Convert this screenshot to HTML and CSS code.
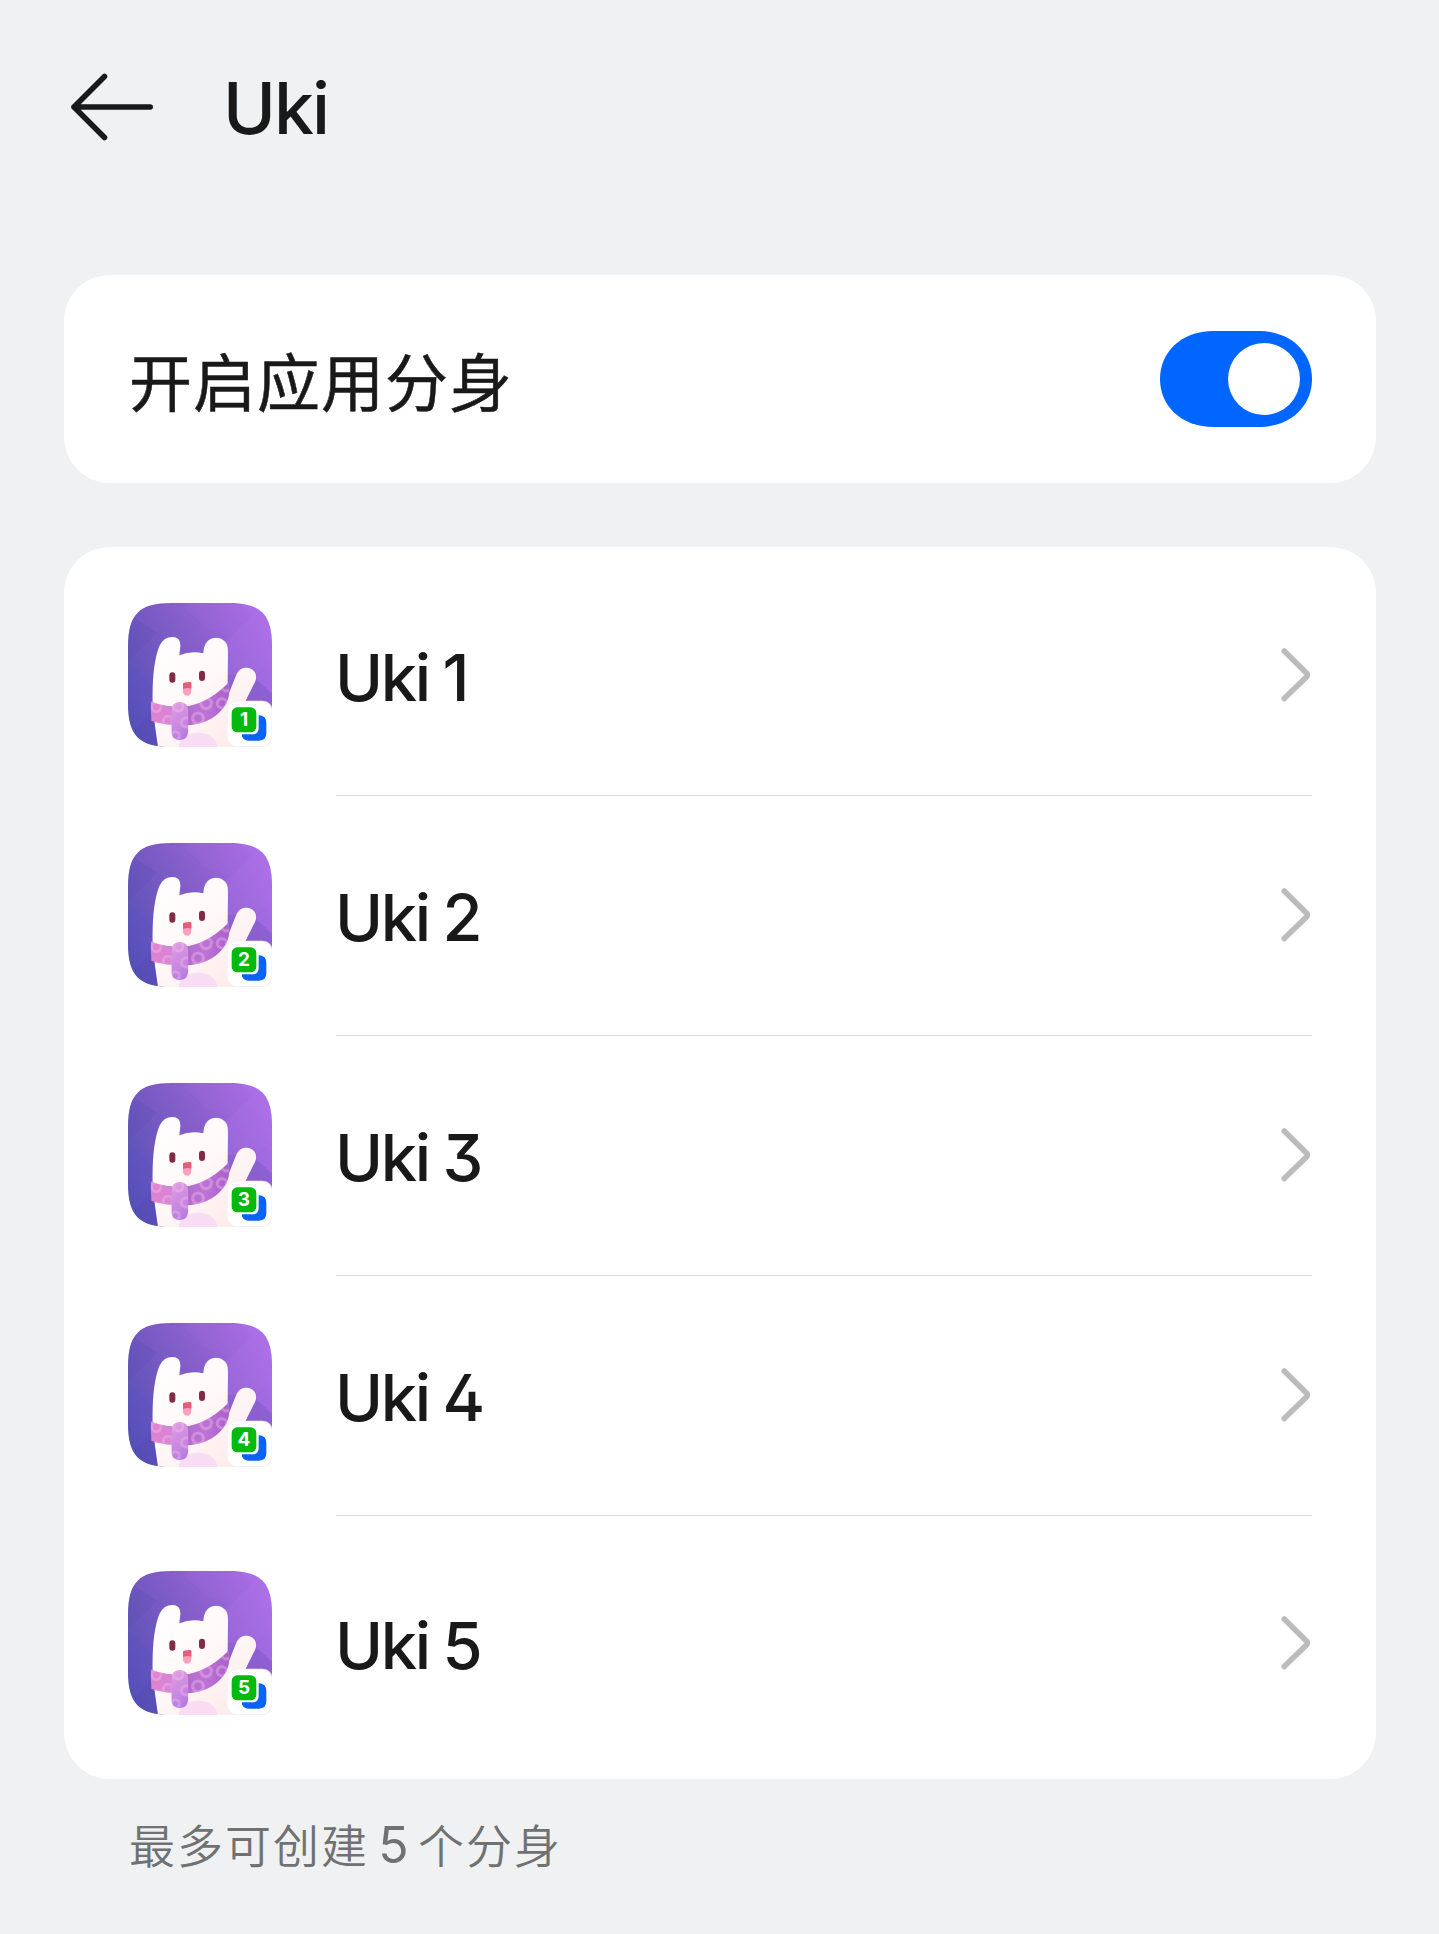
FILE: index.html
```html
<!DOCTYPE html>
<html lang="zh-CN">
<head>
<meta charset="utf-8">
<title>Uki</title>
<link rel="stylesheet" href="styles.css">
</head>
<body>
<svg class="defs" width="0" height="0" aria-hidden="true">
  <defs>
    <linearGradient id="sky" x1="0" y1="0.75" x2="1" y2="0.25">
      <stop offset="0" stop-color="#5651b4"/><stop offset="0.5" stop-color="#825dc8"/><stop offset="1" stop-color="#a86ce2"/>
    </linearGradient>
    <linearGradient id="fur" x1="0" y1="0" x2="0.8" y2="1">
      <stop offset="0" stop-color="#fff"/><stop offset="0.45" stop-color="#fffafa"/><stop offset="1" stop-color="#fdebea"/>
    </linearGradient>
    <linearGradient id="scarfLeft" x1="0" y1="0" x2="1" y2="0">
      <stop offset="0" stop-color="#e183cf"/><stop offset="1" stop-color="#d287d8"/>
    </linearGradient>
    <linearGradient id="scarfRight" x1="0" y1="0" x2="1" y2="0">
      <stop offset="0" stop-color="#b168cb"/><stop offset="0.5" stop-color="#bd74d6"/><stop offset="1" stop-color="#aa5fcb"/>
    </linearGradient>
    <linearGradient id="knot" x1="0" y1="0" x2="0.3" y2="1">
      <stop offset="0" stop-color="#e6a2e0"/><stop offset="1" stop-color="#b97ce0"/>
    </linearGradient>
    <clipPath id="tile"><path d="M160 33H332C428 33 462 67 462 163V465H160C64 465 30 431 30 335V163C30 67 64 33 160 33Z"/></clipPath>
    <clipPath id="scarfShape"><path d="M98 328Q130 341 164 343L208 343Q275 330 331 272Q340 318 316 348Q280 394 212 400L160 399Q124 395 100 386Z"/></clipPath>
    <clipPath id="knotShape"><path d="M160 358Q160 331 185 330Q211 331 211 358V418Q209 444 185 444Q160 444 160 418Z"/></clipPath>
    <symbol id="rabbit" viewBox="30 33 432 432">
      <g clip-path="url(#tile)">
        <rect x="30" y="33" width="432" height="432" fill="url(#sky)"/>
        <path d="M30 65L118 122L30 208Z" fill="#4038a0" opacity="0.1"/>
        <path d="M195 45L118 122L50 80L90 33H195Z" fill="#a46ae0" opacity="0.06"/>
        <path d="M195 45L262 105L340 130L402 70L365 33H205Z" fill="#b070ec" opacity="0.14"/>
        <path d="M402 70L220 250L410 250L462 215V33H365Z" fill="#b878f4" opacity="0.25"/>
        <path d="M30 430L120 345V465H30Z" fill="#4a40b8" opacity="0.2"/>
        <path d="M30 208L120 300V345L30 430Z" fill="#5a50c8" opacity="0.25"/>
        <path d="M462 215L408 256L462 305Z" fill="#b070f4" opacity="0.3"/>
        <path d="M408 256L462 305V340H380Z" fill="#8058cc" opacity="0.45"/>
        <path d="M120 465Q110 400 104 340Q101 220 124 163Q136 135 163 135C181 135 188 146 187 163L184 190Q220 175 256 184Q257 161 267 149C278 136 302 133 315 144C327 152 330 163 330 180L329 270L326 320L356 246C366 226 386 224 400 231C414 239 417 254 412 268L382 328V465Z" fill="url(#fur)"/>
        <rect x="382" y="380" width="80" height="85" fill="#fff"/>
        <ellipse cx="240" cy="466" rx="58" ry="44" fill="#f9dcf3"/>
        <g clip-path="url(#scarfShape)">
          <rect x="96" y="270" width="90" height="140" fill="url(#scarfLeft)"/>
          <rect x="186" y="265" width="150" height="140" fill="url(#scarfRight)"/>
          <g fill="none" stroke="#f0bcee" stroke-width="9" opacity="0.4">
            <circle cx="115" cy="345" r="14"/><circle cx="150" cy="387" r="14"/>
            <circle cx="240" cy="379" r="16"/><circle cx="264" cy="334" r="16"/>
            <circle cx="312" cy="334" r="14"/><circle cx="325" cy="285" r="12"/>
          </g>
        </g>
        <g clip-path="url(#knotShape)">
          <rect x="158" y="328" width="56" height="118" fill="url(#knot)"/>
          <g fill="none" stroke="#f0b8f0" stroke-width="9" opacity="0.4">
            <circle cx="181" cy="343" r="14"/><circle cx="204" cy="391" r="14"/><circle cx="172" cy="431" r="12"/>
          </g>
        </g>
        <rect x="154" y="241" width="18" height="31" rx="9" fill="#832a46"/>
        <rect x="243" y="236" width="18" height="31" rx="9" fill="#832a46"/>
        <path d="M195 276Q195 272 199 272L217 270Q220 270 220 274V296Q219 311 208 311Q195 311 195 298Z" fill="#ff9fba"/>
        <path d="M195 276Q195 272 199 272L217 270Q220 270 220 274V290Q208 285 195 291Z" fill="#e95a80"/>
      </g>
      <rect x="326" y="326" width="137" height="139" rx="29" fill="#f4f2f7"/>
      <rect x="329" y="329" width="131" height="133" rx="27" fill="#fff"/>
      <path d="M422 370Q445 371 445 393V424Q445 446 423 446H393Q372 446 371 427H402Q422 427 422 407Z" fill="#0a63f7"/>
      <rect x="341" y="346" width="74" height="75" rx="17" fill="#05b90f"/>
    </symbol>
    <symbol id="chevron" viewBox="0 0 32 56">
      <path d="M4.2 4L26.6 26.2Q28.2 28 26.6 29.8L4.2 51.5" fill="none" stroke="#bcbcbc" stroke-width="5.6" stroke-linecap="round"/>
    </symbol>
  </defs>
</svg>

<header class="header">
  <svg class="back" viewBox="0 0 88 72"><path d="M36.5 5.5L6 36L36.5 66.5M6 36H82.2" fill="none" stroke="#191919" stroke-width="5.6" stroke-linecap="round" stroke-linejoin="round"/></svg>
  <h1 class="title">Uki</h1>
</header>

<main class="content">
  <section class="card switch-card">
    <span class="switch-label">开启应用分身</span>
    <svg class="toggle" viewBox="0 0 152 96"><path d="M54 0H98C132 0 152 22 152 48S132 96 98 96H54C20 96 0 74 0 48S20 0 54 0Z" fill="#0066ff"/><circle cx="104" cy="48" r="36" fill="#fff"/></svg>
  </section>

  <section class="card list">
    <div class="row">
      <div class="app"><svg class="app-art"><use href="#rabbit"/></svg><span class="badge">1</span></div>
      <div class="name">Uki 1</div>
      <svg class="chevron"><use href="#chevron"/></svg>
    </div>
    <div class="row">
      <div class="app"><svg class="app-art"><use href="#rabbit"/></svg><span class="badge">2</span></div>
      <div class="name">Uki 2</div>
      <svg class="chevron"><use href="#chevron"/></svg>
    </div>
    <div class="row">
      <div class="app"><svg class="app-art"><use href="#rabbit"/></svg><span class="badge">3</span></div>
      <div class="name">Uki 3</div>
      <svg class="chevron"><use href="#chevron"/></svg>
    </div>
    <div class="row">
      <div class="app"><svg class="app-art"><use href="#rabbit"/></svg><span class="badge">4</span></div>
      <div class="name">Uki 4</div>
      <svg class="chevron"><use href="#chevron"/></svg>
    </div>
    <div class="row">
      <div class="app"><svg class="app-art"><use href="#rabbit"/></svg><span class="badge">5</span></div>
      <div class="name">Uki 5</div>
      <svg class="chevron"><use href="#chevron"/></svg>
    </div>
  </section>
  <p class="hint">最多可创建 <span class="hint-num">5</span> 个分身</p>
</main>
</body>
</html>
```
FILE: styles.css
```css
* { box-sizing: border-box; }

body {
  margin: 0;
  min-height: 1934px;
  background: #eff1f3;
  color: #191919;
  font-family: Inter, "Noto Sans CJK SC", sans-serif;
}

.defs { position: absolute; }

.header {
  display: flex;
  align-items: center;
  height: 214px;
  padding-left: 68px;
}

.back { width: 88px; height: 72px; }

.title {
  margin: 0 0 0 67px;
  padding-top: 1px;
  font: 450 71.5px/100px Inter, sans-serif;
  letter-spacing: -2px;
}

.content { padding: 61px 63px 0 64px; }

.card {
  background: #fff;
  border-radius: 46px;
}

.switch-card {
  display: flex;
  align-items: center;
  justify-content: space-between;
  height: 208px;
  padding: 0 64px 0 65px;
}

.switch-label {
  font: 400 63px/96px "Noto Sans CJK SC", sans-serif;
  letter-spacing: 1px;
  -webkit-text-stroke: 0.5px #191919;
}

.toggle { width: 152px; height: 96px; }

.list {
  margin-top: 64px;
  padding: 8px 64px 16px;
}

.row {
  display: grid;
  grid-template-columns: 144px 1fr 32px;
  column-gap: 64px;
  align-items: center;
  height: 240px;
}

.row + .row {
  background: linear-gradient(#dedede, #dedede) 208px 0 / 100% 1px no-repeat;
}

.row:last-child {
  height: 248px;
  padding-top: 8px;
}

.app {
  position: relative;
  width: 144px;
  height: 144px;
}

.app-art { display: block; width: 144px; height: 144px; }

.badge {
  position: absolute;
  left: 104px;
  top: 104px;
  width: 24px;
  height: 25px;
  color: #fff;
  font: 700 19px/26px Inter, sans-serif;
  text-align: center;
}

.name {
  padding-top: 6px;
  margin-left: -1px;
  font: 450 65px/96px Inter, sans-serif;
  font-feature-settings: "cv02", "cv09";
  letter-spacing: -2.3px;
  word-spacing: -1.5px;
}

.chevron { width: 32px; height: 56px; }

.hint {
  margin: 28px 0 0 65px;
  color: #707171;
  font: 350 46px/72px "Noto Sans CJK SC", sans-serif;
  letter-spacing: 2px;
  word-spacing: -3px;
}

.hint-num { font: 400 50px/1 Inter, sans-serif; letter-spacing: 0; }
```
